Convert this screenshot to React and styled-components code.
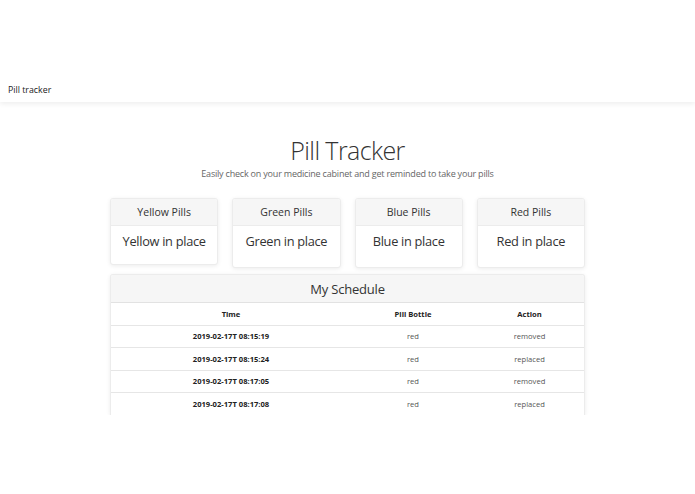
import styled, { createGlobalStyle } from "styled-components";

const GlobalStyle = createGlobalStyle`
  html, body {
    margin: 0;
    padding: 0;
    background: #ffffff;
    font-family: "Open Sans", "Noto Sans", sans-serif;
    color: #212529;
  }
`;

const NavBar = styled.div`
  height: 102px;
  display: flex;
  align-items: flex-end;
  padding: 0 8px 6px;
  box-sizing: border-box;
  box-shadow: 0 2px 5px rgba(0, 0, 0, 0.07);
  font-size: 8.8px;
  color: #222;
`;

const Main = styled.div`
  width: 475px;
  margin: 0 auto;
  padding-top: 31px;
`;

const Title = styled.h1`
  margin: 0;
  text-align: center;
  font-weight: 300;
  font-size: 25px;
  letter-spacing: -0.6px;
  line-height: 34px;
  color: #333;
`;

const Subtitle = styled.p`
  margin: 0;
  text-align: center;
  font-size: 9px;
  letter-spacing: -0.2px;
  font-weight: 400;
  color: #666;
  line-height: 14px;
`;

const CardRow = styled.div`
  display: grid;
  grid-template-columns: repeat(4, 1fr);
  gap: 14px;
  margin-top: 17px;
  align-items: start;
`;

const Card = styled.div`
  background: #fff;
  border: 1px solid #ececec;
  border-radius: 3px;
  box-shadow: 0 1px 4px rgba(0, 0, 0, 0.08);
  overflow: hidden;
  height: ${p => p.h || 68}px;
  box-sizing: border-box;
`;

const CardHeader = styled.div`
  background: #f6f6f6;
  border-bottom: 1px solid #ececec;
  height: 26px;
  display: flex;
  align-items: center;
  justify-content: center;
  font-size: 10.5px;
  color: #333;
`;

const CardBody = styled.div`
  text-align: center;
  font-size: 12.8px;
  letter-spacing: -0.3px;
  color: #333;
  padding-top: 6px;
`;

const Schedule = styled.div`
  margin-top: 6px;
  background: #fff;
  border: 1px solid #ececec;
  border-bottom: none;
  border-radius: 3px 3px 0 0;
  box-shadow: 0 1px 4px rgba(0, 0, 0, 0.08);
  height: 140px;
  overflow: hidden;
`;

const ScheduleHeader = styled.div`
  background: #f6f6f6;
  border-bottom: 1px solid #e2e2e2;
  height: 27px;
  display: flex;
  align-items: center;
  justify-content: center;
  font-size: 13px;
  letter-spacing: -0.2px;
  color: #333;
`;

const Row = styled.div`
  display: grid;
  grid-template-columns: 240px 124px 1fr;
  height: 22.5px;
  align-items: center;
  border-bottom: 1px solid #e6e6e6;
  box-sizing: border-box;
  font-size: 7.6px;
  color: #333;
`;

const Cell = styled.div`
  text-align: center;
  font-weight: ${p => (p.bold ? 700 : 400)};
  color: ${p => (p.bold ? "#222" : "#555")};
`;

const pills = [
  { title: "Yellow Pills", text: "Yellow in place", h: 67 },
  { title: "Green Pills", text: "Green in place", h: 70 },
  { title: "Blue Pills", text: "Blue in place", h: 70 },
  { title: "Red Pills", text: "Red in place", h: 70 },
];

const events = [
  { time: "2019-02-17T 08:15:19", bottle: "red", action: "removed" },
  { time: "2019-02-17T 08:15:24", bottle: "red", action: "replaced" },
  { time: "2019-02-17T 08:17:05", bottle: "red", action: "removed" },
  { time: "2019-02-17T 08:17:08", bottle: "red", action: "replaced" },
];

export default function App() {
  return (
    <>
      <GlobalStyle />
      <NavBar>Pill tracker</NavBar>
      <Main>
        <Title>Pill Tracker</Title>
        <Subtitle>Easily check on your medicine cabinet and get reminded to take your pills</Subtitle>

        <CardRow>
          {pills.map(p => (
            <Card key={p.title} h={p.h}>
              <CardHeader>{p.title}</CardHeader>
              <CardBody>{p.text}</CardBody>
            </Card>
          ))}
        </CardRow>

        <Schedule>
          <ScheduleHeader>My Schedule</ScheduleHeader>
          <Row>
            <Cell bold>Time</Cell>
            <Cell bold>Pill Bottle</Cell>
            <Cell bold>Action</Cell>
          </Row>
          {events.map((e, i) => (
            <Row key={i}>
              <Cell bold>{e.time}</Cell>
              <Cell>{e.bottle}</Cell>
              <Cell>{e.action}</Cell>
            </Row>
          ))}
        </Schedule>
      </Main>
    </>
  );
}
